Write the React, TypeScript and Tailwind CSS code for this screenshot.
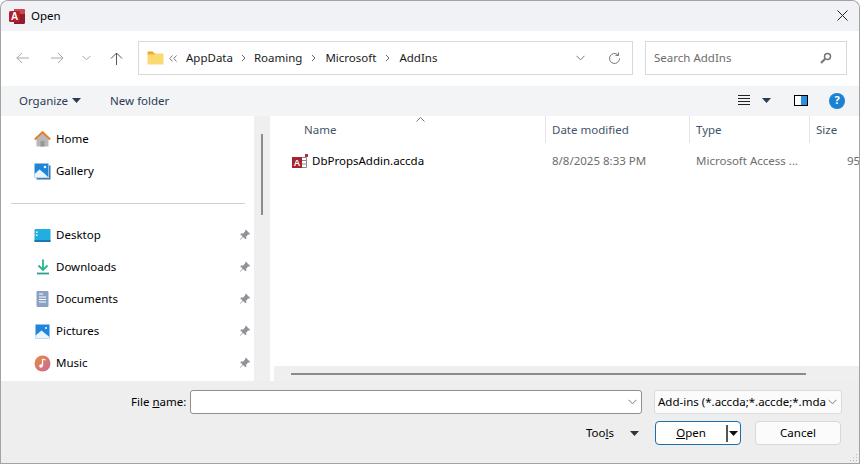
import React from "react";

const Pin = () => (
  <svg width="12" height="12" viewBox="0 0 12 12" className="shrink-0">
    <path d="M7 .8 11.2 5l-1 .6-1-.2-2 2 .2 2-.9.9L4 8 1 11l-.3-.3L3.500 7.600 1.200 5.300l.9-.9 2 .2 2-2-.1-1z" fill="#8f949c" />
  </svg>
);

const NavIcon = ({ name }: { name: string }) => {
  if (name === "Home")
    return (
      <svg width="17" height="16" viewBox="0 0 17 16">
        <path d="M2.500 8v7.500h12V8L8.500 2.500z" fill="#b8b8b8" />
        <path d="M6.500 10h4v5.500h-4z" fill="#969696" />
        <path d="M.8 8.400 8.500 1.200l7.700 7.200" fill="none" stroke="#e07f2c" strokeWidth="2" />
      </svg>
    );
  if (name === "Gallery")
    return (
      <svg width="17" height="17" viewBox="0 0 17 17">
        <path d="M15 2.500h1.500V16.500H2.500V15H15z" fill="#3f78ae" />
        <path d="M.5.500h14v14H.5z" fill="#1c86db" />
        <path d="M.5 14.500V11l5-4.500 5 4 4 4z" fill="#e9f4fc" />
        <circle cx="11" cy="4" r="1.300" fill="#fff" />
      </svg>
    );
  if (name === "Desktop")
    return (
      <svg width="17" height="13" viewBox="0 0 17 13">
        <rect x=".5" y="0" width="16" height="13" rx="1" fill="#22aee0" />
        <path d="M.5 11h16v2H.5z" fill="#1878b0" />
        <path d="M2 2.500h1.500V4H2zM2 5.500h1.500V7H2z" fill="#fff" />
      </svg>
    );
  if (name === "Downloads")
    return (
      <svg width="14" height="16" viewBox="0 0 14 16">
        <path d="M7 .5v10M2.500 6.500 7 11l4.500-4.500" fill="none" stroke="#2bb38e" strokeWidth="1.800" />
        <path d="M1 14.500h12" stroke="#2aa18c" strokeWidth="1.800" />
      </svg>
    );
  if (name === "Documents")
    return (
      <svg width="13" height="16" viewBox="0 0 13 16">
        <rect x=".5" width="12" height="16" rx="1" fill="#8ba3c2" />
        <path d="M3 3h4M3 6h7M3 8.500h7M3 11h7" stroke="#fff" strokeWidth="1" />
      </svg>
    );
  if (name === "Pictures")
    return (
      <svg width="15" height="15" viewBox="0 0 15 15">
        <rect width="14" height="14" x=".5" y=".5" fill="#1f86dc" />
        <path d="M.5 14.500v-3l6-5 8 6.500v1.500z" fill="#e9f4fc" />
        <circle cx="11" cy="4" r="1" fill="#fff" />
      </svg>
    );
  return (
    <svg width="17" height="17" viewBox="0 0 17 17">
      <defs>
        <linearGradient id="mus" x1="0" y1="0" x2="1" y2="1">
          <stop offset="0" stopColor="#e98a3c" />
          <stop offset="1" stopColor="#c9689a" />
        </linearGradient>
      </defs>
      <circle cx="8.500" cy="8.500" r="8" fill="url(#mus)" />
      <path d="M8.500 4v6.500M8.500 4l3 1" stroke="#fff" strokeWidth="1.300" fill="none" />
      <circle cx="7" cy="11" r="1.800" fill="#fff" />
    </svg>
  );
};

const Item = ({ name, pin }: { name: string; pin?: boolean }) => (
  <div className="flex h-8 items-center">
    <div className="flex w-[55px] shrink-0 justify-end pr-[5px] pl-[33px]">
      <div className="flex w-[17px] justify-center"><NavIcon name={name} /></div>
    </div>
    <span className="flex-1 text-black">{name}</span>
    {pin && <div className="mr-[3px]"><Pin /></div>}
  </div>
);

const Caret = ({ color = "#2b3a55" }: { color?: string }) => (
  <svg width="9" height="5" viewBox="0 0 9 5"><path d="M0 0h9L4.500 5z" fill={color} /></svg>
);

const Chev = ({ color = "#777", w = 9 }: { color?: string; w?: number }) => (
  <svg width={w} height="6" viewBox="0 0 9 6"><path d="M.5.800 4.500 4.800 8.500.8" fill="none" stroke={color} strokeWidth="1" /></svg>
);

const Sep = ({ first }: { first?: boolean }) => (
  <svg width="5" height="8" viewBox="0 0 5 8" className={first ? "mx-[8px]" : "mx-[9px]"}><path d="M1 1l3 3-3 3" fill="none" stroke="#666" strokeWidth="1" /></svg>
);

export default function App() {
  return (
    <div className="flex h-[464px] w-[860px] flex-col overflow-hidden rounded-t-lg border-x border-t border-[#a3a3a3] bg-[#eeeeee] text-[11.5px] text-black [font-family:'Noto_Sans',sans-serif]">
      {/* title */}
      <div className="flex h-[30px] shrink-0 items-center bg-[#f1f2f6]">
        <svg width="17" height="17" viewBox="0 0 17 17" className="ml-2 shrink-0">
          <path d="M5 1h9.500A1.500 1.500 0 0 1 16 2.500v12a1.500 1.500 0 0 1-1.500 1.500H5z" fill="#8f1d2c" />
          <path d="M5 1h9.500A1.500 1.500 0 0 1 16 2.500V6H5z" fill="#c8494f" />
          <rect x="0" y="3" width="11" height="11" rx="1.500" fill="#b0202c" />
          <text x="5.500" y="12" textAnchor="middle" fontSize="10" fontWeight="700" fill="#fff" fontFamily="Liberation Sans, sans-serif">A</text>
        </svg>
        <span className="ml-[5px]">Open</span>
        <div className="flex-1" />
        <svg width="11" height="11" viewBox="0 0 11 11" className="mr-[11px] mb-[1px]">
          <path d="M.5.500l10 10M10.500.500l-10 10" stroke="#222" strokeWidth="1" />
        </svg>
      </div>

      {/* nav */}
      <div className="flex h-[55px] shrink-0 items-center bg-white pb-[1px]">
        <div className="ml-[15px] flex w-[122px] shrink-0 items-center">
          <svg width="13" height="12" viewBox="0 0 13 12"><path d="M.8 6h12M6 1 .8 6 6 11" fill="none" stroke="#a8a8a8" /></svg>
          <svg width="13" height="12" viewBox="0 0 13 12" className="ml-[22px]"><path d="M0 6h12M7 1l5 5-5 5" fill="none" stroke="#a8a8a8" /></svg>
          <div className="ml-[18px]"><Chev color="#a8a8a8" /></div>
          <svg width="13" height="13" viewBox="0 0 13 13" className="ml-[19px]"><path d="M6.500 13V1M1 6.500 6.500 1 12 6.500" fill="none" stroke="#555" /></svg>
        </div>
        <div className="flex h-[34px] w-[495px] shrink-0 items-center border border-[#d9d9d9] pl-2 text-[#1a1a1a]">
          <svg width="17" height="14" viewBox="0 0 17 14" className="shrink-0">
            <path d="M.5 1.500A1 1 0 0 1 1.500.500h4l1.500 1.500h-6.500z" fill="#e6a817" />
            <path d="M.5 2.500h15.500a.5.500 0 0 1 .5.500v10a.5.500 0 0 1-.5.500H1a.5.500 0 0 1-.5-.5z" fill="#fbd971" />
            <path d="M.5 2h7l1 1.500H.5z" fill="#eeb428" />
          </svg>
          <svg width="8" height="7" viewBox="0 0 8 7" className="ml-[5px] mr-[6px] shrink-0"><path d="M3.500.5.800 3.500l2.700 3M7.500.5 4.800 3.500l2.700 3" fill="none" stroke="#777" /></svg>
          <span className="ml-[3px]">AppData</span>
          <Sep first />
          <span>Roaming</span>
          <Sep />
          <span>Microsoft</span>
          <Sep />
          <span>AddIns</span>
          <div className="flex-1" />
          <Chev />
          <svg width="13" height="13" viewBox="0 0 13 13" className="mr-[11px] ml-[23px]">
            <path d="M11.500 6.500a5 5 0 1 1-1.600-3.700" fill="none" stroke="#777" />
            <path d="M10.500.500v3h-3" fill="none" stroke="#777" />
          </svg>
        </div>
        <div className="ml-[12px] flex h-[34px] w-[202px] shrink-0 items-center justify-between border border-[#d9d9d9] pr-[14px] pl-2 text-[#6d6d6d]">
          <span>Search AddIns</span>
          <svg width="12" height="12" viewBox="0 0 12 12">
            <circle cx="7.500" cy="4.500" r="3" fill="none" stroke="#767676" strokeWidth="1.500" />
            <path d="M5.200 6.800 1 11" stroke="#767676" strokeWidth="2" />
          </svg>
        </div>
      </div>

      {/* toolbar */}
      <div className="flex h-[30px] shrink-0 items-center bg-[#f3f4f6] pb-[1px] text-[#2b3a55]">
        <span className="ml-[18px]">Organize</span>
        <div className="ml-[4px]"><Caret /></div>
        <span className="ml-[29px]">New folder</span>
        <div className="flex-1" />
        <svg width="12" height="11" viewBox="0 0 12 11"><path d="M0 .5h12M0 3.500h12M0 6.500h12M0 9.500h12" stroke="#222" /></svg>
        <div className="ml-[12px]"><Caret /></div>
        <div className="ml-[23px] h-[11px] w-[14px] border border-black bg-[linear-gradient(to_right,#fff_50%,#2e8fdc_50%)]" />
        <div className="mr-[14px] ml-[21px] flex h-4 w-4 items-center justify-center rounded-full bg-[#1a82d4] text-[11px] font-bold text-white">?</div>
      </div>

      {/* main */}
      <div className="flex min-h-0 flex-1">
        <div className="flex w-[269px] shrink-0">
          <div className="w-[253px] bg-white">
            <div className="pt-[7px]">
              <Item name="Home" />
              <Item name="Gallery" />
            </div>
            <div className="mt-[16px] mr-[9px] ml-[10px] h-px bg-[#d0d0d0]" />
            <div className="pt-[15px]">
              <Item name="Desktop" pin />
              <Item name="Downloads" pin />
              <Item name="Documents" pin />
              <Item name="Pictures" pin />
              <Item name="Music" pin />
            </div>
          </div>
          <div className="flex flex-1 justify-center bg-[#efefef] pt-[18px]">
            <div className="h-[81px] w-[2px] bg-[#8c8c8c]" />
          </div>
        </div>
        <div className="w-[4px] shrink-0 bg-white" />
        <div className="flex min-w-0 flex-1 flex-col bg-white">
          <div className="relative flex h-[27px] shrink-0 text-[#44546a]">
            <svg width="9" height="5" viewBox="0 0 9 5" className="absolute top-[1px] left-[142px]"><path d="M.5 4.500l4-4 4 4" fill="none" stroke="#777" /></svg>
            <div className="flex h-full w-[272px] shrink-0 items-center border-r border-[#e5e5e5] pl-[30px]">Name</div>
            <div className="flex h-full w-[144px] shrink-0 items-center border-r border-[#e5e5e5] pl-[6px]">Date modified</div>
            <div className="flex h-full w-[120px] shrink-0 items-center border-r border-[#e5e5e5] pl-[6px]">Type</div>
            <div className="flex h-full items-center pl-[6px]">Size</div>
          </div>
          <div className="flex h-[36px] shrink-0 items-center overflow-hidden whitespace-nowrap text-[#6d6d6d]">
            <div className="flex w-[272px] shrink-0 items-center pl-[18px] text-black">
              <svg width="16" height="15" viewBox="0 0 16 15" className="mr-[4px] shrink-0">
                <path d="M9.500 3.500h5v10h-5z" fill="#fff" stroke="#8a8a8a" />
                <path d="M9.500 6.500h5M9.500 10h5" stroke="#8a8a8a" />
                <rect x="13" y="0" width="3" height="3" fill="#b0303a" />
                <rect x="0" y="3" width="10" height="11" fill="#a4262c" />
                <text x="5" y="12" textAnchor="middle" fontSize="9" fontWeight="700" fill="#fff" fontFamily="Liberation Sans, sans-serif">A</text>
              </svg>
              DbPropsAddin.accda
            </div>
            <div className="w-[144px] shrink-0 pl-[6px]">8/8/2025 8:33 PM</div>
            <div className="w-[120px] shrink-0 pl-[6px]">Microsoft Access ...</div>
            <div className="pl-[37px]">95</div>
          </div>
          <div className="flex-1" />
          <div className="flex h-[15px] shrink-0 items-center bg-[#efefef] pl-[17px]">
            <div className="h-[2px] w-[515px] bg-[#8c8c8c]" />
          </div>
        </div>
      </div>

      {/* bottom */}
      <div className="relative h-[83px] shrink-0 bg-[#eeeeee]">
        <div className="mt-[9px] flex h-[24px] items-center">
          <span className="ml-[130px] w-[59px] shrink-0 whitespace-nowrap">File <u>n</u>ame:</span>
          <div className="flex h-[24px] w-[452px] shrink-0 items-center justify-end rounded-[3px] border border-[#8f8f8f] bg-white pr-[4px]">
            <Chev />
          </div>
          <div className="ml-[12px] flex h-[24px] w-[188px] shrink-0 items-center justify-between rounded-[3px] border border-[#dcdcdc] bg-[#fbfbfb] pr-[4px] pl-[3px] whitespace-nowrap">
            <span>Add-ins (*.accda;*.accde;*.mda</span>
            <Chev />
          </div>
        </div>
        <div className="mt-[7px] flex h-[24px] items-center">
          <span className="ml-[585px] w-[44px] shrink-0">Too<u>l</u>s</span>
          <Caret color="#333" />
          <div className="ml-[16px] flex h-[24px] w-[86px] shrink-0 items-center rounded-[4px] border border-[#1a6fa8] bg-white">
            <span className="w-[70px] text-center"><u>O</u>pen</span>
            <div className="h-[17px] w-[2px] bg-[#555]" />
            <div className="ml-[1px]"><Caret color="#111" /></div>
          </div>
          <div className="ml-[14px] flex h-[24px] w-[86px] shrink-0 items-center justify-center rounded-[4px] border border-[#d8d8d8] bg-[#fbfbfb]">Cancel</div>
        </div>
        <svg width="10" height="10" viewBox="0 0 10 10" className="absolute right-[1px] bottom-[1px]">
          <path d="M8 1h1v1H8zM5 4h1v1H5zM8 4h1v1H8zM2 7h1v1H2zM5 7h1v1H5zM8 7h1v1H8z" fill="#b5b5b5" />
        </svg>
        <div className="absolute right-0 bottom-0 left-0 h-px bg-[#a3a3a3]" />
      </div>
    </div>
  );
}
